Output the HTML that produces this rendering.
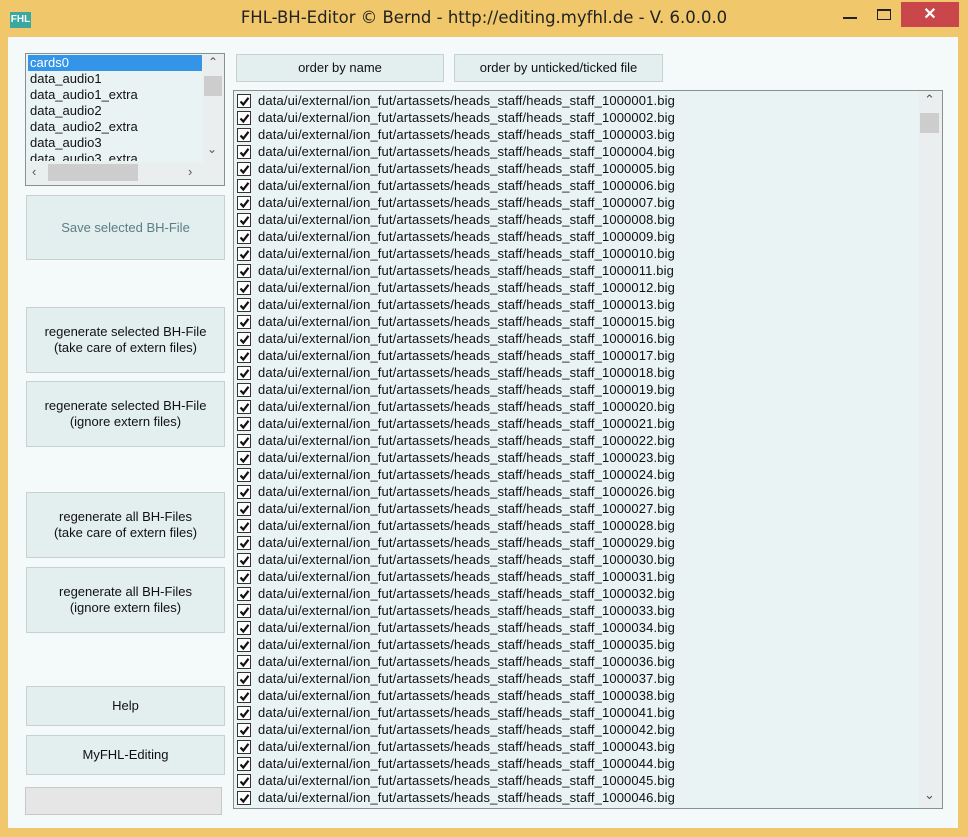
<!DOCTYPE html>
<html><head><meta charset="utf-8"><style>
*{margin:0;padding:0;box-sizing:border-box}
body{width:968px;height:837px;background:#f0c76a;font-family:"Liberation Sans",Arial,sans-serif;position:relative;overflow:hidden;color:#111}
.abs{position:absolute}
#client{left:8px;top:37px;width:950px;height:791px;background:#f4f9f9}
.title{left:0;top:8px;width:968px;text-align:center;font-size:16.5px;color:#222;font-family:"DejaVu Sans","Liberation Sans",sans-serif;letter-spacing:0px}
.btn{background:#e3eeee;border:1px solid #c8d0d0;font-size:13px;text-align:center;display:flex;align-items:center;justify-content:center;line-height:16px;color:#111}
.lb{border:1px solid #8a9090;background:#e9f3f3}
.row{position:absolute;left:3px;height:17px;font-size:13px;line-height:17px;white-space:nowrap}
.cb{position:absolute;left:0;top:2px;width:14px;height:14px;border:1px solid #333;background:#fff}
.cb svg{position:absolute;left:1px;top:1px}
.row span{position:absolute;left:21px;top:0;letter-spacing:0.13px}
.sb{background:#eaeeee}
.item{position:absolute;left:2px;height:16px;font-size:13px;line-height:16px;padding-left:2px;width:174px}
</style></head><body>
<div class="abs" style="left:10px;top:12px;width:21px;height:16px;background:#3aa8a0;color:#fff;font-size:10px;font-weight:bold;line-height:16px;text-align:center">FHL</div>
<div class="abs title">FHL-BH-Editor © Bernd - http://editing.myfhl.de - V. 6.0.0.0</div>
<div class="abs" style="left:843px;top:17px;width:14px;height:2px;background:#222"></div>
<div class="abs" style="left:877px;top:9px;width:14px;height:11px;border:1px solid #222;border-top-width:2px"></div>
<div class="abs" style="left:901px;top:2px;width:58px;height:25px;background:#c9474a;color:#fff;font-size:16px;text-align:center;line-height:25px;font-weight:bold">✕</div>
<div class="abs" id="client"></div>

<div class="abs lb" style="left:25px;top:53px;width:200px;height:133px">
 <div class="item" style="top:1px;background:#3394e8;color:#fff">cards0</div>
 <div class="item" style="top:17px">data_audio1</div>
 <div class="item" style="top:33px">data_audio1_extra</div>
 <div class="item" style="top:49px">data_audio2</div>
 <div class="item" style="top:65px">data_audio2_extra</div>
 <div class="item" style="top:81px">data_audio3</div>
 <div class="item" style="top:97px;height:10px;overflow:hidden">data_audio3_extra</div>
 <div class="abs sb" style="left:177px;top:1px;width:21px;height:107px"></div>
 <div class="abs" style="left:178px;top:22px;width:18px;height:20px;background:#cdcdcd"></div>
 <div class="abs" style="left:182px;top:1px;font-size:12px;color:#555">⌃</div>
 <div class="abs" style="left:181px;top:88px;font-size:12px;color:#555">⌄</div>
 <div class="abs sb" style="left:1px;top:108px;width:197px;height:23px"></div>
 <div class="abs" style="left:22px;top:110px;width:90px;height:17px;background:#cdcdcd"></div>
 <div class="abs" style="left:6px;top:110px;font-size:13px;color:#555">‹</div>
 <div class="abs" style="left:162px;top:110px;font-size:13px;color:#555">›</div>
</div>

<div class="abs btn" style="left:26px;top:195px;width:199px;height:65px;color:#5a7e86">Save selected BH-File</div>
<div class="abs btn" style="left:26px;top:307px;width:199px;height:66px">regenerate selected BH-File<br>(take care of extern files)</div>
<div class="abs btn" style="left:26px;top:381px;width:199px;height:66px">regenerate selected BH-File<br>(ignore extern files)</div>
<div class="abs btn" style="left:26px;top:492px;width:199px;height:66px">regenerate all BH-Files<br>(take care of extern files)</div>
<div class="abs btn" style="left:26px;top:567px;width:199px;height:66px">regenerate all BH-Files<br>(ignore extern files)</div>
<div class="abs btn" style="left:26px;top:686px;width:199px;height:40px">Help</div>
<div class="abs btn" style="left:26px;top:735px;width:199px;height:40px">MyFHL-Editing</div>
<div class="abs" style="left:25px;top:787px;width:197px;height:28px;background:#e6e6e6;border:1px solid #c8c8c8"></div>

<div class="abs btn" style="left:236px;top:54px;width:208px;height:28px">order by name</div>
<div class="abs btn" style="left:454px;top:54px;width:209px;height:28px">order by unticked/ticked file</div>

<div class="abs lb" style="left:233px;top:90px;width:710px;height:719px">
 <div class="abs sb" style="left:685px;top:0;width:23px;height:717px"></div>
 <div class="abs" style="left:686px;top:22px;width:19px;height:20px;background:#cdcdcd"></div>
 <div class="abs" style="left:690px;top:1px;font-size:13px;color:#555">⌃</div>
 <div class="abs" style="left:690px;top:696px;font-size:13px;color:#555">⌄</div>
 <div id="rows"></div>
</div>
<script>
var n=[];for(var i=1;i<=13;i++)n.push(i);for(i=15;i<=24;i++)n.push(i);for(i=26;i<=38;i++)n.push(i);for(i=41;i<=46;i++)n.push(i);
var h='';n.forEach(function(v,k){var s=String(1000000+v);h+='<div class="row" style="top:'+(1+k*17)+'px"><div class="cb"><svg width="11" height="11" viewBox="0 0 11 11"><path d="M1.5 5.5 L4.3 8.5 L9.5 1.8" stroke="#111" stroke-width="2.2" fill="none"/></svg></div><span>data/ui/external/ion_fut/artassets/heads_staff/heads_staff_'+s+'.big</span></div>'});
document.getElementById('rows').innerHTML=h;
</script>
</body></html>
